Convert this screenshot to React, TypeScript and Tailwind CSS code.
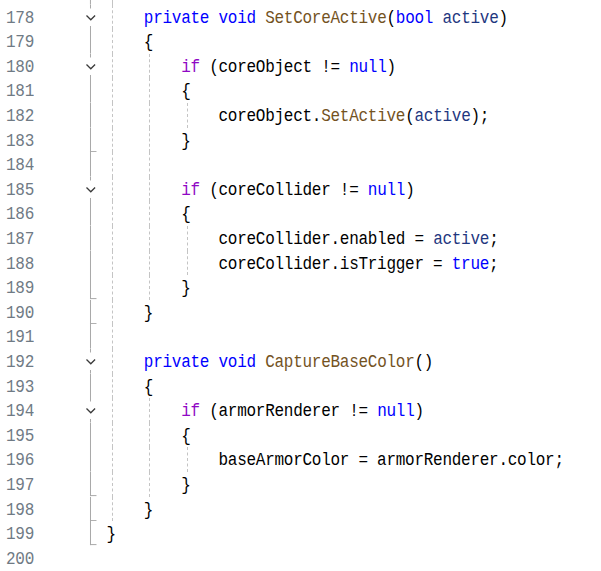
import React from "react";

type Tok = [string, string];

const K = "text-[#0000ff]";
const C = "text-[#8f08c4]";
const M = "text-[#74531f]";
const P = "text-[#1f377f]";
const D = "text-[#000000]";

type Row = {
  n: number | null;
  indent: number;
  toks: Tok[];
  g1?: boolean;
  g2?: boolean;
  g3?: boolean;
  fold?: "chev" | "tick" | "line" | "none";
};

const rows: Row[] = [
  { n: 178, indent: 4, fold: "chev", g1: true, toks: [["private", K], [" ", D], ["void", K], [" ", D], ["SetCoreActive", M], ["(", D], ["bool", K], [" ", D], ["active", P], [")", D]] },
  { n: 179, indent: 4, fold: "line", g1: true, toks: [["{", D]] },
  { n: 180, indent: 8, fold: "chev", g1: true, g2: true, toks: [["if", C], [" (coreObject != ", D], ["null", K], [")", D]] },
  { n: 181, indent: 8, fold: "line", g1: true, g2: true, toks: [["{", D]] },
  { n: 182, indent: 12, fold: "line", g1: true, g2: true, g3: true, toks: [["coreObject.", D], ["SetActive", M], ["(", D], ["active", P], [");", D]] },
  { n: 183, indent: 8, fold: "tick", g1: true, g2: true, toks: [["}", D]] },
  { n: 184, indent: 0, fold: "line", g1: true, g2: true, toks: [] },
  { n: 185, indent: 8, fold: "chev", g1: true, g2: true, toks: [["if", C], [" (coreCollider != ", D], ["null", K], [")", D]] },
  { n: 186, indent: 8, fold: "line", g1: true, g2: true, toks: [["{", D]] },
  { n: 187, indent: 12, fold: "line", g1: true, g2: true, g3: true, toks: [["coreCollider.enabled = ", D], ["active", P], [";", D]] },
  { n: 188, indent: 12, fold: "line", g1: true, g2: true, g3: true, toks: [["coreCollider.isTrigger = ", D], ["true", K], [";", D]] },
  { n: 189, indent: 8, fold: "tick", g1: true, g2: true, toks: [["}", D]] },
  { n: 190, indent: 4, fold: "tick", g1: true, toks: [["}", D]] },
  { n: 191, indent: 0, fold: "line", g1: true, toks: [] },
  { n: 192, indent: 4, fold: "chev", g1: true, toks: [["private", K], [" ", D], ["void", K], [" ", D], ["CaptureBaseColor", M], ["()", D]] },
  { n: 193, indent: 4, fold: "line", g1: true, toks: [["{", D]] },
  { n: 194, indent: 8, fold: "chev", g1: true, g2: true, toks: [["if", C], [" (armorRenderer != ", D], ["null", K], [")", D]] },
  { n: 195, indent: 8, fold: "line", g1: true, g2: true, toks: [["{", D]] },
  { n: 196, indent: 12, fold: "line", g1: true, g2: true, g3: true, toks: [["baseArmorColor = armorRenderer.color;", D]] },
  { n: 197, indent: 8, fold: "tick", g1: true, g2: true, toks: [["}", D]] },
  { n: 198, indent: 4, fold: "tick", g1: true, toks: [["}", D]] },
  { n: 199, indent: 0, fold: "tick", toks: [["}", D]] },
  { n: 200, indent: 0, fold: "none", toks: [] },
];

const LINE = "#a8a8a8";

function Fold({ kind, h }: { kind: Row["fold"]; h: number }) {
  return (
    <svg width="70.5" height={h} viewBox={`0 0 70.5 ${h}`} className="block shrink-0">
      {kind === "line" && <line x1="54.5" x2="54.5" y1="0" y2={h} stroke={LINE} strokeWidth="1" />}
      {kind === "tick" && (
        <g>
          <line x1="54.5" x2="54.5" y1="0" y2={h - 0.5} stroke={LINE} strokeWidth="1" />
          <line x1="54" x2="60.5" y1={h - 1} y2={h - 1} stroke={LINE} strokeWidth="1" />
        </g>
      )}
      {kind === "chev" && (
        <g>
          <line x1="54.5" x2="54.5" y1="0" y2="3.5" stroke={LINE} strokeWidth="1" />
          <line x1="54.5" x2="54.5" y1="21" y2={h} stroke={LINE} strokeWidth="1" />
          <polyline points="50.5,10.5 54.8,14.8 59.1,10.5" fill="none" stroke="#3a3a3a" strokeWidth="1.3" />
        </g>
      )}
    </svg>
  );
}

function Guide({ pos }: { pos: 1 | 2 | 3 }) {
  const cls =
    pos === 1 ? "left-[5.5px]" : pos === 2 ? "left-[42.5px]" : "left-[80.5px]";
  return <span className={`absolute top-0 bottom-0 w-0 border-l border-dashed border-[#c4c4c4] ${cls}`} />;
}

export default function App() {
  const H = 24.6;
  return (
    <div
      className="w-[601px] h-[571px] overflow-hidden bg-white text-[16px] tracking-[-0.27px]"
      style={{ fontFamily: '"Liberation Mono", "DejaVu Sans Mono", monospace' }}
    >
      {/* partial row above */}
      <div className="flex h-[4.7px]">
        <div className="w-[36px] shrink-0" />
        <Fold kind="line" h={4.7} />
        <div className="relative flex-1">
          <Guide pos={1} />
        </div>
      </div>
      {rows.map((r) => (
        <div key={r.n ?? 0} className="flex h-[24.6px] leading-[24.6px]">
          <div className="w-[36px] shrink-0 pr-[2px] text-right text-[#6f7a84] pt-[1px]">
            <span className="inline-block scale-y-[1.18]">{r.n}</span>
          </div>
          <Fold kind={r.fold} h={H} />
          <div className="relative flex-1 whitespace-pre pt-[1px]">
            {r.g1 && <Guide pos={1} />}
            {r.g2 && <Guide pos={2} />}
            {r.g3 && <Guide pos={3} />}
            <span className="inline-block scale-y-[1.18]">
              <span>{" ".repeat(r.indent)}</span>
              {r.toks.map((t, i) => (
                <span key={i} className={t[1]}>
                  {t[0]}
                </span>
              ))}
            </span>
          </div>
        </div>
      ))}
    </div>
  );
}
